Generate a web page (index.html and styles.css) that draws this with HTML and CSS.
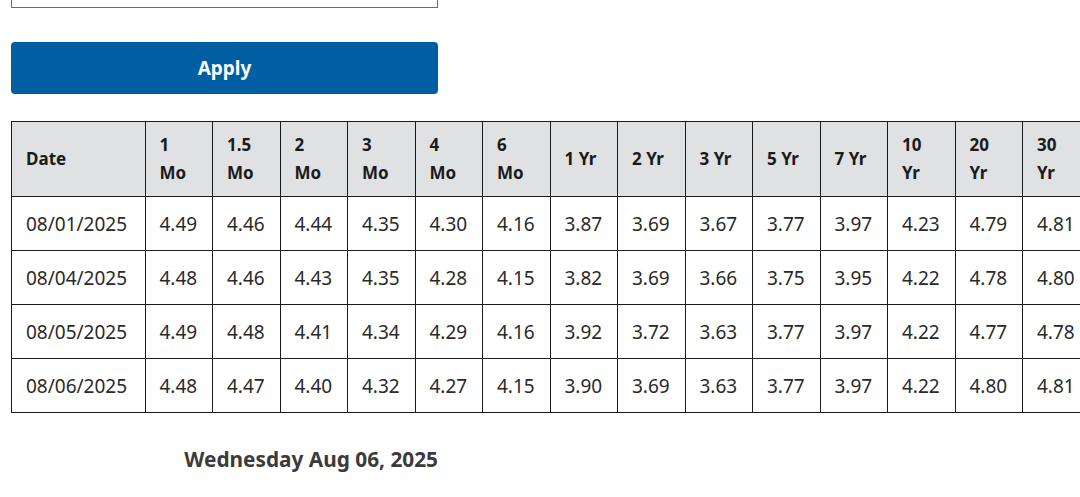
FILE: index.html
```html
<!DOCTYPE html>
<html lang="en">
<head>
<meta charset="utf-8">
<title>Daily Treasury Rates</title>
<link rel="stylesheet" href="styles.css">
</head>
<body>
<div class="page">
  <div class="filter">
    <div class="select-box"></div>
    <button class="apply" type="button">Apply</button>
  </div>
  <div class="table-wrap">
    <table class="rates">
      <colgroup>
        <col class="c-date">
        <col class="c-num"><col class="c-num"><col class="c-num"><col class="c-num"><col class="c-num"><col class="c-num"><col class="c-num">
        <col class="c-num"><col class="c-num"><col class="c-num"><col class="c-num"><col class="c-num"><col class="c-num"><col class="c-num">
      </colgroup>
      <thead>
        <tr>
          <th>Date</th><th>1 Mo</th><th>1.5 Mo</th><th>2 Mo</th><th>3 Mo</th><th>4 Mo</th><th>6 Mo</th><th>1 Yr</th><th>2 Yr</th><th>3 Yr</th><th>5 Yr</th><th>7 Yr</th><th>10 Yr</th><th>20 Yr</th><th>30 Yr</th>
        </tr>
      </thead>
      <tbody>
        <tr><td>08/01/2025</td><td>4.49</td><td>4.46</td><td>4.44</td><td>4.35</td><td>4.30</td><td>4.16</td><td>3.87</td><td>3.69</td><td>3.67</td><td>3.77</td><td>3.97</td><td>4.23</td><td>4.79</td><td>4.81</td></tr>
        <tr><td>08/04/2025</td><td>4.48</td><td>4.46</td><td>4.43</td><td>4.35</td><td>4.28</td><td>4.15</td><td>3.82</td><td>3.69</td><td>3.66</td><td>3.75</td><td>3.95</td><td>4.22</td><td>4.78</td><td>4.80</td></tr>
        <tr><td>08/05/2025</td><td>4.49</td><td>4.48</td><td>4.41</td><td>4.34</td><td>4.29</td><td>4.16</td><td>3.92</td><td>3.72</td><td>3.63</td><td>3.77</td><td>3.97</td><td>4.22</td><td>4.77</td><td>4.78</td></tr>
        <tr><td>08/06/2025</td><td>4.48</td><td>4.47</td><td>4.40</td><td>4.32</td><td>4.27</td><td>4.15</td><td>3.90</td><td>3.69</td><td>3.63</td><td>3.77</td><td>3.97</td><td>4.22</td><td>4.80</td><td>4.81</td></tr>
      </tbody>
    </table>
  </div>
  <div class="updated">Wednesday Aug 06, 2025</div>
</div>
</body>
</html>
```

FILE: styles.css
```css
html, body {
  margin: 0;
  padding: 0;
  background: #ffffff;
  overflow: hidden;
}

body {
  font-family: "Noto Sans", "Open Sans", sans-serif;
  color: #1b1b1b;
}

.page {
  padding-left: 11px;
  width: 1100px;
}

.filter {
  width: 427px;
  display: flex;
  flex-direction: column;
  gap: 34px;
  margin-top: -33px;
}

.select-box {
  height: 39px;
  border: 1px solid #6d6d6d;
  background: #ffffff;
}

.apply {
  height: 52px;
  width: 100%;
  border: 0;
  border-radius: 4px;
  background: #005ea2;
  color: #ffffff;
  font-family: "Noto Sans", "Open Sans", sans-serif;
  font-weight: 700;
  font-size: 19px;
  padding: 0;
  cursor: pointer;
}

.table-wrap {
  margin-top: 27px;
}

.rates {
  border-collapse: collapse;
  table-layout: fixed;
  width: 1078.5px;
}

.c-date {
  width: 133.5px;
}

.c-num {
  width: 67.5px;
}

.rates th,
.rates td {
  border: 1px solid #1b1b1b;
  text-align: left;
  vertical-align: middle;
  padding-left: 14px;
  padding-right: 13px;
}

.rates th {
  background: #dfe1e2;
  font-size: 17px;
  font-weight: 700;
  line-height: 28px;
  padding-top: 9px;
  padding-bottom: 9px;
}

.rates td {
  font-size: 19px;
  font-weight: 400;
  line-height: 27px;
  padding-top: 14px;
  padding-bottom: 12px;
  white-space: nowrap;
  color: #2a2a2a;
}

.updated {
  width: 427px;
  text-align: right;
  margin-top: 33px;
  font-size: 20.8px;
  font-weight: 700;
  color: #3b3b3b;
  line-height: 26px;
}
```
